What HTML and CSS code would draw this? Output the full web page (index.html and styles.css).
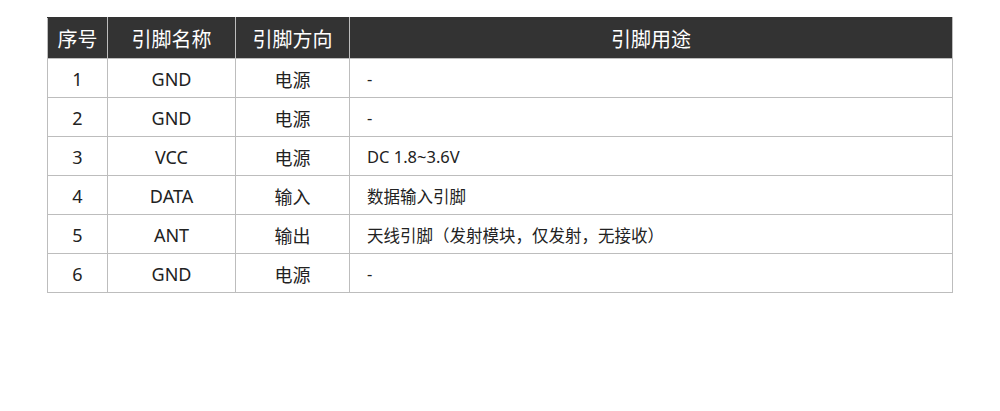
FILE: index.html
```html
<!DOCTYPE html>
<html lang="zh">
<head>
<meta charset="utf-8">
<link rel="stylesheet" href="styles.css">
</head>
<body>
<table class="pins">
  <colgroup>
    <col class="c1"><col class="c2"><col class="c3"><col class="c4">
  </colgroup>
  <thead>
    <tr><th>序号</th><th>引脚名称</th><th>引脚方向</th><th>引脚用途</th></tr>
  </thead>
  <tbody>
    <tr><td>1</td><td>GND</td><td>电源</td><td class="desc">-</td></tr>
    <tr><td>2</td><td>GND</td><td>电源</td><td class="desc">-</td></tr>
    <tr><td>3</td><td>VCC</td><td>电源</td><td class="desc">DC 1.8~3.6V</td></tr>
    <tr><td>4</td><td>DATA</td><td>输入</td><td class="desc">数据输入引脚</td></tr>
    <tr><td>5</td><td>ANT</td><td>输出</td><td class="desc">天线引脚（发射模块，仅发射，无接收）</td></tr>
    <tr><td>6</td><td>GND</td><td>电源</td><td class="desc">-</td></tr>
  </tbody>
</table>
</body>
</html>
```
FILE: styles.css
```css
html, body {
  margin: 0;
  padding: 0;
  background: #fff;
}
body {
  padding: 17px 0 0 47px;
  font-family: "Noto Sans", "Noto Sans CJK SC", sans-serif;
  color: #222222;
}
.pins {
  border-collapse: collapse;
  width: 905px;
  table-layout: fixed;
}
.c1 { width: 60px; }
.c2 { width: 128px; }
.c3 { width: 114px; }
.c4 { width: 603px; }
.pins th {
  background: #333333;
  color: #ffffff;
  font-weight: 400;
  font-size: 20px;
  height: 40px;
  padding: 0;
  text-align: center;
  border: 1px solid #bdbdbd;
  border-top-color: #333;
}
.pins td {
  height: 37px;
  padding: 1px 0 0;
  font-size: 18px;
  text-align: center;
  border: 1px solid #bdbdbd;
}
.pins td.desc {
  text-align: left;
  padding-left: 17px;
  font-size: 16.5px;
}
```
